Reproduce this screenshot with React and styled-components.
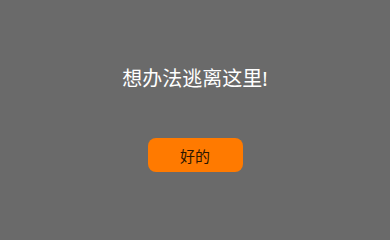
import React from "react";
import styled, { createGlobalStyle } from "styled-components";

const GlobalStyle = createGlobalStyle`
  html, body {
    margin: 0;
    padding: 0;
    background: #6a6a6a;
  }
`;

const Screen = styled.div`
  width: 390px;
  height: 235px;
  background: #6a6a6a;
  display: flex;
  flex-direction: column;
  align-items: center;
  padding-top: 66px;
  box-sizing: border-box;
  font-family: "Noto Sans", "Noto Sans CJK SC", sans-serif;
`;

const Title = styled.h1`
  margin: 0;
  color: #ffffff;
  font-size: 20px;
  font-weight: 400;
  line-height: 26px;
`;

const Button = styled.button`
  margin-top: 46px;
  width: 95px;
  height: 34px;
  border: none;
  border-radius: 8px;
  background: #ff7a00;
  color: #2b1600;
  font-family: "Noto Sans", "Noto Sans CJK SC", sans-serif;
  font-size: 15px;
  cursor: pointer;
`;

const App = () => {
  return (
    <>
      <GlobalStyle />
      <Screen>
        <Title>想办法逃离这里!</Title>
        <Button>好的</Button>
      </Screen>
    </>
  );
};

export default App;
